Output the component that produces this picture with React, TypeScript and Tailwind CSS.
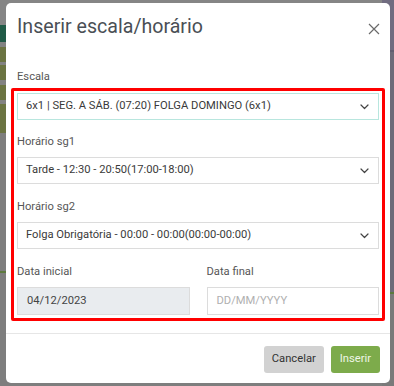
import React from 'react';

function Chevron() {
  return (
    <svg width="9" height="6" viewBox="0 0 9 6" fill="none">
      <path d="M1 1l3.5 3.5L8 1" stroke="#444" strokeWidth="1.2" strokeLinecap="round" strokeLinejoin="round" />
    </svg>
  );
}

function SelectBox({ value, focused }: { value: string; focused?: boolean }) {
  return (
    <div
      className={
        'h-[27px] flex items-center justify-between pl-[8px] pr-[9px] border bg-white text-[11.2px] text-[#3a3a3a] ' +
        (focused ? 'border-[#b8e6de]' : 'border-[#dcdcdc]')
      }
    >
      <span>{value}</span>
      <Chevron />
    </div>
  );
}

export default function App() {
  return (
    <div className="relative w-[394px] h-[386px] overflow-hidden bg-[#7e7e7e]" style={{ fontFamily: 'Roboto, "Liberation Sans", sans-serif' }}>
      {/* dimmed page behind the modal */}
      <div className="absolute inset-0 flex">
        <div className="flex-1 flex flex-col">
          <div className="h-[25px] bg-[#858585]" />
          <div className="h-[17px] bg-[#205a46]" />
          <div className="h-[5px] bg-[#828282]" />
          <div className="h-[15px] bg-[#6b7442]" />
          <div className="h-[3px] bg-[#828282]" />
          <div className="h-[15px] bg-[#6b7442]" />
          <div className="h-[5px] bg-[#828282]" />
          <div className="h-[15px] bg-[#6b7442]" />
          <div className="h-[4px] bg-[#828282]" />
          <div className="h-[29px] bg-[#6b7442]" />
          <div className="h-[138px] bg-[#7e7e7e]" />
          <div className="h-[2px] bg-[#5d7a3e]" />
          <div className="flex-1 bg-[#7e7e7e]" />
        </div>
        <div className="w-[12px] flex flex-col bg-[#6e6b79]">
          <div className="h-[50px] bg-[#716c80]" />
          <div className="h-[2px] bg-[#625e70]" />
          <div className="h-[240px]" />
          <div className="h-[2px] bg-[#5d7a3e]" />
          <div className="flex-1 bg-[#7a7a7a]" />
        </div>
      </div>

      <div className="relative ml-[6px] mt-[3px] w-[384px] h-[380px] bg-white rounded-[5px] flex flex-col">
        <div className="flex items-start justify-between pt-[12px] pl-[11px] pr-[10px]">
          <h2 className="text-[19.6px] leading-[24px] text-[#4a4f55]">Inserir escala/horário</h2>
          <svg width="12" height="12" viewBox="0 0 12 12" className="mt-[8px]">
            <path d="M1 1l10 10M11 1L1 11" stroke="#6a6a6a" strokeWidth="1.2" />
          </svg>
        </div>

        <div className="flex-1 px-[11px] pt-[30px] text-[11.2px]">
          <div className="flex flex-col">
            <label className="leading-[16px] text-[#575757] mb-[8px]">Escala</label>
            <SelectBox value="6x1 | SEG. A SÁB. (07:20) FOLGA DOMINGO (6x1)" focused />
          </div>
          <div className="flex flex-col mt-[14px]">
            <label className="leading-[16px] text-[#575757] mb-[7px]">Horário sg1</label>
            <SelectBox value="Tarde - 12:30 - 20:50(17:00-18:00)" />
          </div>
          <div className="flex flex-col mt-[15px]">
            <label className="leading-[16px] text-[#575757] mb-[7px]">Horário sg2</label>
            <SelectBox value="Folga Obrigatória - 00:00 - 00:00(00:00-00:00)" />
          </div>
          <div className="grid grid-cols-2 gap-[17px] mt-[15px]">
            <div className="flex flex-col">
              <label className="leading-[16px] text-[#575757] mb-[7px]">Data inicial</label>
              <div className="h-[28px] flex items-center pl-[9px] border border-[#dcdcdc] bg-[#e9ecef] text-[#444]">04/12/2023</div>
            </div>
            <div className="flex flex-col">
              <label className="leading-[16px] text-[#575757] mb-[7px]">Data final</label>
              <div className="h-[28px] flex items-center pl-[9px] border border-[#dcdcdc] bg-white text-[#b0b0b0]">DD/MM/YYYY</div>
            </div>
          </div>
        </div>

        <div className="border-t border-[#e6e6e6] flex justify-end gap-[7px] pt-[12px] pb-[10px] pr-[10px] text-[11.2px]">
          <button className="h-[27px] px-[8px] rounded-[3px] bg-[#d2d2d2] text-[#333]">Cancelar</button>
          <button className="h-[27px] px-[9px] rounded-[3px] bg-[#7dab4b] text-[#eef6e6]">Inserir</button>
        </div>

        {/* red highlight annotation */}
        <div className="absolute left-[5px] top-[85px] w-[374px] h-[233px] border-[3px] border-[#ff0000] rounded-[2px] pointer-events-none" />
      </div>
    </div>
  );
}
